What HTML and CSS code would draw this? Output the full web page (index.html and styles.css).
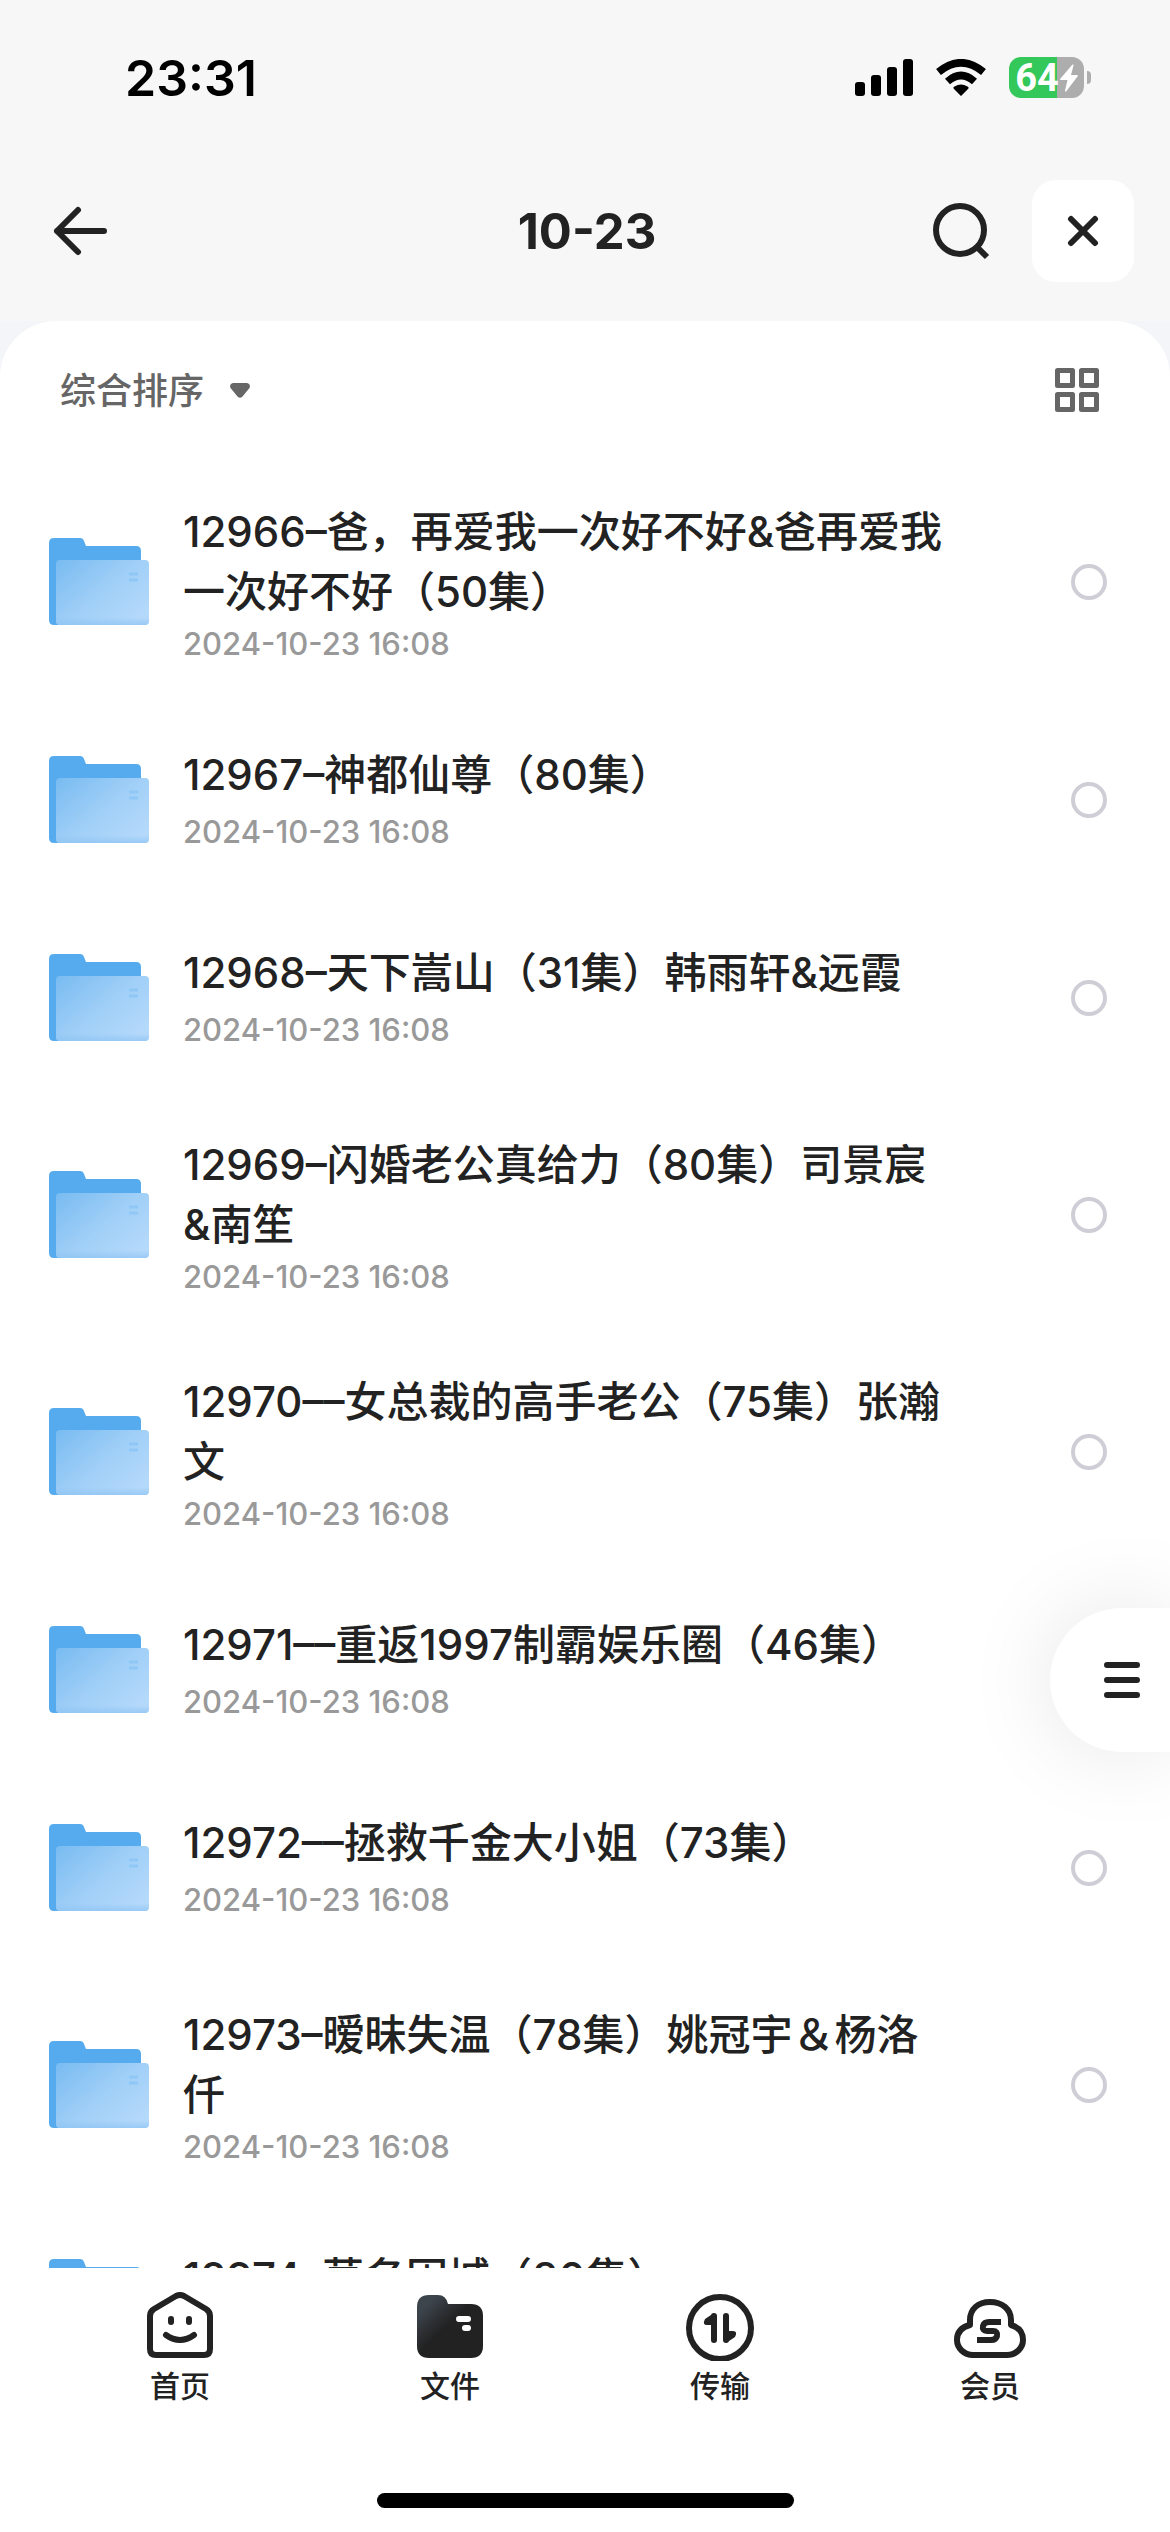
FILE: index.html
```html
<!DOCTYPE html>
<html lang="zh-CN">
<head>
	<meta charset="UTF-8">
	<meta name="viewport" content="width=device-width">
	<title>10-23</title>
	<link rel="stylesheet" href="styles.css">
</head>
<body>
	<svg class="defs" width="0" height="0" aria-hidden="true">
		<defs>
			<linearGradient id="front" x1="0" y1="0" x2="1" y2="0.8">
				<stop offset="0" stop-color="#78bbf1"/>
				<stop offset="0.55" stop-color="#a0cff7"/>
				<stop offset="1" stop-color="#b5d9fb"/>
			</linearGradient>
			<linearGradient id="shade" x1="0" y1="0" x2="0" y2="1">
				<stop offset="0.88" stop-color="#8cc3f3" stop-opacity="0"/>
				<stop offset="1" stop-color="#8cc3f3" stop-opacity="0.7"/>
			</linearGradient>
			<linearGradient id="dark" x1="0" y1="0.1" x2="0.7" y2="0.8">
				<stop offset="0.15" stop-color="#3c444c"/>
				<stop offset="0.6" stop-color="#222"/>
			</linearGradient>
		</defs>
		<symbol id="folder" viewBox="0 0 100 88">
			<path fill="#55abee" d="M0 5Q0 0 5 0H31Q34 0 35 3L37 8H87Q92 8 92 13V87H5Q0 87 0 82Z"/>
			<rect x="7" y="22" width="93" height="65" rx="4" fill="url(#front)"/>
			<rect x="7" y="22" width="93" height="65" rx="4" fill="url(#shade)"/>
			<path stroke="#8fc7f6" stroke-width="3" d="M80 36h9M80 42h9"/>
		</symbol>
	</svg>

	<div class="page">
		<header class="header">
			<div class="status">
				<span class="time">23:31</span>
				<div class="status_icons">
					<svg width="58" height="38" viewBox="0 0 58 38">
						<rect x="0" y="23" width="10" height="14" rx="3"/>
						<rect x="16" y="16" width="10" height="21" rx="3"/>
						<rect x="32" y="8" width="10" height="29" rx="3"/>
						<rect x="48" y="0" width="10" height="37" rx="3"/>
					</svg>
					<svg width="52" height="38" viewBox="0 0 52 38">
						<path d="M26 37L19 30Q17.500 28.500 19.500 27.500Q26 23.500 32.500 27.500Q34.500 28.500 33 30Z"/>
						<path fill="none" stroke="#000" stroke-width="7.500" d="M12.500 22.500Q26 10.500 39.500 22.500M3.500 13Q26 -5.500 48.500 13"/>
					</svg>
					<div class="battery">
						<span class="battery_body">
							<span class="battery_num">64</span>
							<svg width="18" height="28" viewBox="0 0 18 28"><path fill="#fff" d="M12.500 0.500Q14 0 13.500 1.500L11 11H17Q18.500 11 17.500 12.500L6.500 27Q5 28.500 5 26.500L7.500 16H1Q-0.500 16 0.500 14.500Z"/></svg>
						</span>
						<span class="battery_cap"></span>
					</div>
				</div>
			</div>
			<div class="nav">
				<button class="back" aria-label="返回">
					<svg width="56" height="54" viewBox="0 0 56 54"><path d="M26 6L5 27L26 48M5 27H52"/></svg>
				</button>
				<h1 class="title">10-23</h1>
				<div class="nav_right">
					<button class="search" aria-label="搜索">
						<svg width="57" height="57" viewBox="0 0 57 57"><circle cx="27" cy="27" r="24"/><path class="butt" d="M44 44L54 54"/></svg>
					</button>
					<button class="close" aria-label="关闭">
						<svg width="32" height="32" viewBox="0 0 32 32"><path d="M4 4L28 28M28 4L4 28"/></svg>
					</button>
				</div>
			</div>
		</header>

		<main class="sheet">
			<div class="toolbar">
				<button class="sort">
					<span>综合排序</span>
					<svg width="20" height="15" viewBox="0 0 20 15"><path fill="#666" d="M3 0H17Q21 1 19.500 5L12.500 13.500Q10 16 7.500 13.500L0.500 5Q-1 1 3 0Z"/></svg>
				</button>
				<button class="grid" aria-label="宫格视图">
					<svg width="44" height="44" viewBox="0 0 44 44">
						<g fill="none" stroke="#666" stroke-width="5" stroke-linejoin="round">
							<path d="M2.500 2.500h15v15h-15zM26.500 2.500h15v15h-15zM2.500 26.500h15v15h-15zM26.500 26.500h15v15h-15z"/>
						</g>
					</svg>
				</button>
			</div>

			<ul class="list">
				<li class="file">
					<svg class="folder"><use href="#folder"/></svg>
					<label class="info" for="f1"><span class="name">12966–爸，再爱我一次好不好&amp;爸再爱我<br>一次好不好（50集）</span><time>2024-10-23 16:08</time></label>
					<input type="checkbox" id="f1">
				</li>
				<li class="file">
					<svg class="folder"><use href="#folder"/></svg>
					<label class="info" for="f2"><span class="name">12967–神都仙尊（80集）</span><time>2024-10-23 16:08</time></label>
					<input type="checkbox" id="f2">
				</li>
				<li class="file">
					<svg class="folder"><use href="#folder"/></svg>
					<label class="info" for="f3"><span class="name">12968–天下嵩山（31集）韩雨轩&amp;远霞</span><time>2024-10-23 16:08</time></label>
					<input type="checkbox" id="f3">
				</li>
				<li class="file">
					<svg class="folder"><use href="#folder"/></svg>
					<label class="info" for="f4"><span class="name">12969–闪婚老公真给力（80集）司景宸<br>&amp;南笙</span><time>2024-10-23 16:08</time></label>
					<input type="checkbox" id="f4">
				</li>
				<li class="file">
					<svg class="folder"><use href="#folder"/></svg>
					<label class="info" for="f5"><span class="name">12970––女总裁的高手老公（75集）张瀚<br>文</span><time>2024-10-23 16:08</time></label>
					<input type="checkbox" id="f5">
				</li>
				<li class="file">
					<svg class="folder"><use href="#folder"/></svg>
					<label class="info" for="f6"><span class="name">12971––重返1997制霸娱乐圈（46集）</span><time>2024-10-23 16:08</time></label>
					<input type="checkbox" id="f6">
				</li>
				<li class="file">
					<svg class="folder"><use href="#folder"/></svg>
					<label class="info" for="f7"><span class="name">12972––拯救千金大小姐（73集）</span><time>2024-10-23 16:08</time></label>
					<input type="checkbox" id="f7">
				</li>
				<li class="file">
					<svg class="folder"><use href="#folder"/></svg>
					<label class="info" for="f8"><span class="name">12973–暧昧失温（78集）姚冠宇＆杨洛<br>仟</span><time>2024-10-23 16:08</time></label>
					<input type="checkbox" id="f8">
				</li>
				<li class="file">
					<svg class="folder"><use href="#folder"/></svg>
					<label class="info" for="f9"><span class="name">12974–莫名困城（80集）</span><time>2024-10-23 16:08</time></label>
					<input type="checkbox" id="f9">
				</li>
			</ul>
		</main>

		<footer class="footer">
			<nav class="tabs">
				<a class="tab" href="#home">
					<svg width="72" height="72" viewBox="0 0 72 72">
						<path d="M32 7Q36 5 40 7L62 20Q66 22.500 66 27V60Q66 66 60 66H12Q6 66 6 60V27Q6 22.500 10 20Z"/>
						<path d="M27 30v3M45 30v3M22 46Q36 56 50 46"/>
					</svg>
					首页
				</a>
				<a class="tab" href="#files">
					<svg width="72" height="72" viewBox="0 0 72 72">
						<path class="solid" fill="url(#dark)" d="M3 18Q3 6 15 6H24Q32 6 34 15H57Q69 15 69 27V57Q69 69 57 69H15Q3 69 3 57Z"/>
						<path stroke="#fff" d="M45 30h9M51 39h3"/>
					</svg>
					文件
				</a>
				<a class="tab" href="#transfer">
					<svg width="72" height="72" viewBox="0 0 72 72">
						<circle cx="36" cy="39" r="31"/>
						<path d="M30 27V51M42 27V51"/>
						<path class="solid" d="M30 24L21 30Q18 36 23 36H30ZM42 54L51 48Q54 42 49 42H42Z"/>
					</svg>
					传输
				</a>
				<a class="tab" href="#vip">
					<svg width="72" height="72" viewBox="0 0 72 72">
						<path d="M19 66H53C62 66 69 59 69 51C69 43 64 38 57 36V31C57 20 48 13 36 13S16 20 16 31V36C8 38 3 43 3 51C3 59 10 66 19 66Z"/>
						<path class="butt" d="M47 33H35Q30 33 29 37Q28 42 33 42H39Q44 42 43 47Q42 51 37 51H23"/>
					</svg>
					会员
				</a>
			</nav>
			<div class="home_bar"></div>
		</footer>

		<button class="float" aria-label="菜单">
			<svg width="36" height="36" viewBox="0 0 36 36"><path d="M3 3H33M3 18H33M3 33H33"/></svg>
		</button>
	</div>
</body>
</html>
```
FILE: styles.css
```css
*{
	box-sizing: border-box;
}
body{
	margin: 0;
	background: #fff;
	color: #222;
	font-family: Inter, "Noto Sans CJK SC", sans-serif;
}
button{
	display: flex;
	align-items: center;
	padding: 0;
	border: 0;
	background: none;
	color: inherit;
	font: inherit;
}
svg{
	display: block;
	flex: none;
}
.defs{
	position: absolute;
}
.page{
	position: relative;
	display: flex;
	flex-direction: column;
	height: 100vh;
	overflow: hidden;
	background: #f4f5f8;
}
.header{
	background: #f7f7f7;
}

/* 状态栏 */
.status{
	display: flex;
	align-items: center;
	justify-content: space-between;
	height: 141px;
	padding: 14px 79px 0 125px;
	color: #000;
}
.time{
	font-size: 50px;
	font-weight: 600;
}
.status_icons{
	display: flex;
	align-items: center;
	gap: 22px;
}
.battery{
	display: flex;
	align-items: center;
	gap: 3px;
}
.battery_body{
	display: flex;
	align-items: center;
	justify-content: center;
	gap: 1px;
	width: 75px;
	height: 41px;
	border-radius: 12px;
	background: linear-gradient(90deg, #34c759 64%, #adadad 64%);
}
.battery_num{
	color: #fff;
	font-family: Roboto, sans-serif;
	font-size: 38px;
	font-weight: 700;
}
.battery_cap{
	width: 4px;
	height: 13px;
	border-radius: 0 6px 6px 0;
	background: #adadad;
}

/* 导航 */
.nav{
	display: grid;
	grid-template-columns: 1fr auto 1fr;
	align-items: center;
	height: 180px;
	padding: 0 36px 0 52px;
}
.back svg, .search svg, .close svg, .float svg, .tab svg{
	fill: none;
	stroke: #222;
	stroke-width: 6;
	stroke-linecap: round;
	stroke-linejoin: round;
}
svg .butt{
	stroke-linecap: butt;
}
svg .solid{
	stroke: none;
}
.tab svg path.solid:not([fill]){
	fill: #222;
}
.title{
	margin: 0 12px 0 0;
	font-size: 49px;
	font-weight: 700;
}
.nav_right{
	display: flex;
	align-items: center;
	justify-content: flex-end;
	gap: 42px;
}
.close{
	justify-content: center;
	width: 102px;
	height: 102px;
	border-radius: 24px;
	background: #fff;
}

/* 列表 */
.sheet{
	flex: 1;
	min-height: 0;
	overflow: hidden;
	border-radius: 56px 56px 0 0;
	background: #fff;
}
.toolbar{
	display: flex;
	align-items: center;
	justify-content: space-between;
	height: 142px;
	padding: 0 71px 4px 60px;
	color: #666;
}
.sort{
	gap: 26px;
	font-size: 36px;
	font-weight: 500;
}
.sort span{
	padding-bottom: 5px;
}
.list{
	margin: 0;
	padding: 0;
	list-style: none;
}
.file{
	display: flex;
	align-items: center;
	min-height: 198px;
	padding: 39px 63px 38px 49px;
}
.folder{
	width: 100px;
	height: 88px;
}
.info{
	flex: 1;
	display: flex;
	flex-direction: column;
	gap: 4px;
	min-height: 109px;
	margin: 0 100px 0 34px;
}
.name{
	min-height: 65px;
	font-size: 42px;
	font-weight: 500;
	line-height: 60px;
}
.info time{
	color: #999;
	font-size: 31px;
	font-weight: 500;
	line-height: 36px;
}
.file input{
	appearance: none;
	flex: none;
	width: 36px;
	height: 36px;
	margin: 0;
	border: 4px solid #cfced6;
	border-radius: 50%;
}

/* 底部 */
.footer{
	display: flex;
	flex-direction: column;
	align-items: center;
	justify-content: space-between;
	height: 264px;
	padding: 21px 45px 24px;
	background: #fff;
}
.tabs{
	display: flex;
	align-self: stretch;
}
.tab{
	flex: 1;
	display: flex;
	flex-direction: column;
	align-items: center;
	gap: 7px;
	color: #222;
	font-size: 30px;
	font-weight: 500;
	line-height: 36px;
	text-decoration: none;
}
.home_bar{
	width: 417px;
	height: 15px;
	border-radius: 8px;
	background: #000;
}

/* 悬浮菜单 */
.float{
	position: absolute;
	right: 0;
	bottom: 780px;
	width: 120px;
	height: 144px;
	padding-left: 54px;
	border-radius: 72px 0 0 72px;
	background: #fff;
	box-shadow: 0 0 90px rgba(0,0,0,.1);
}
```
